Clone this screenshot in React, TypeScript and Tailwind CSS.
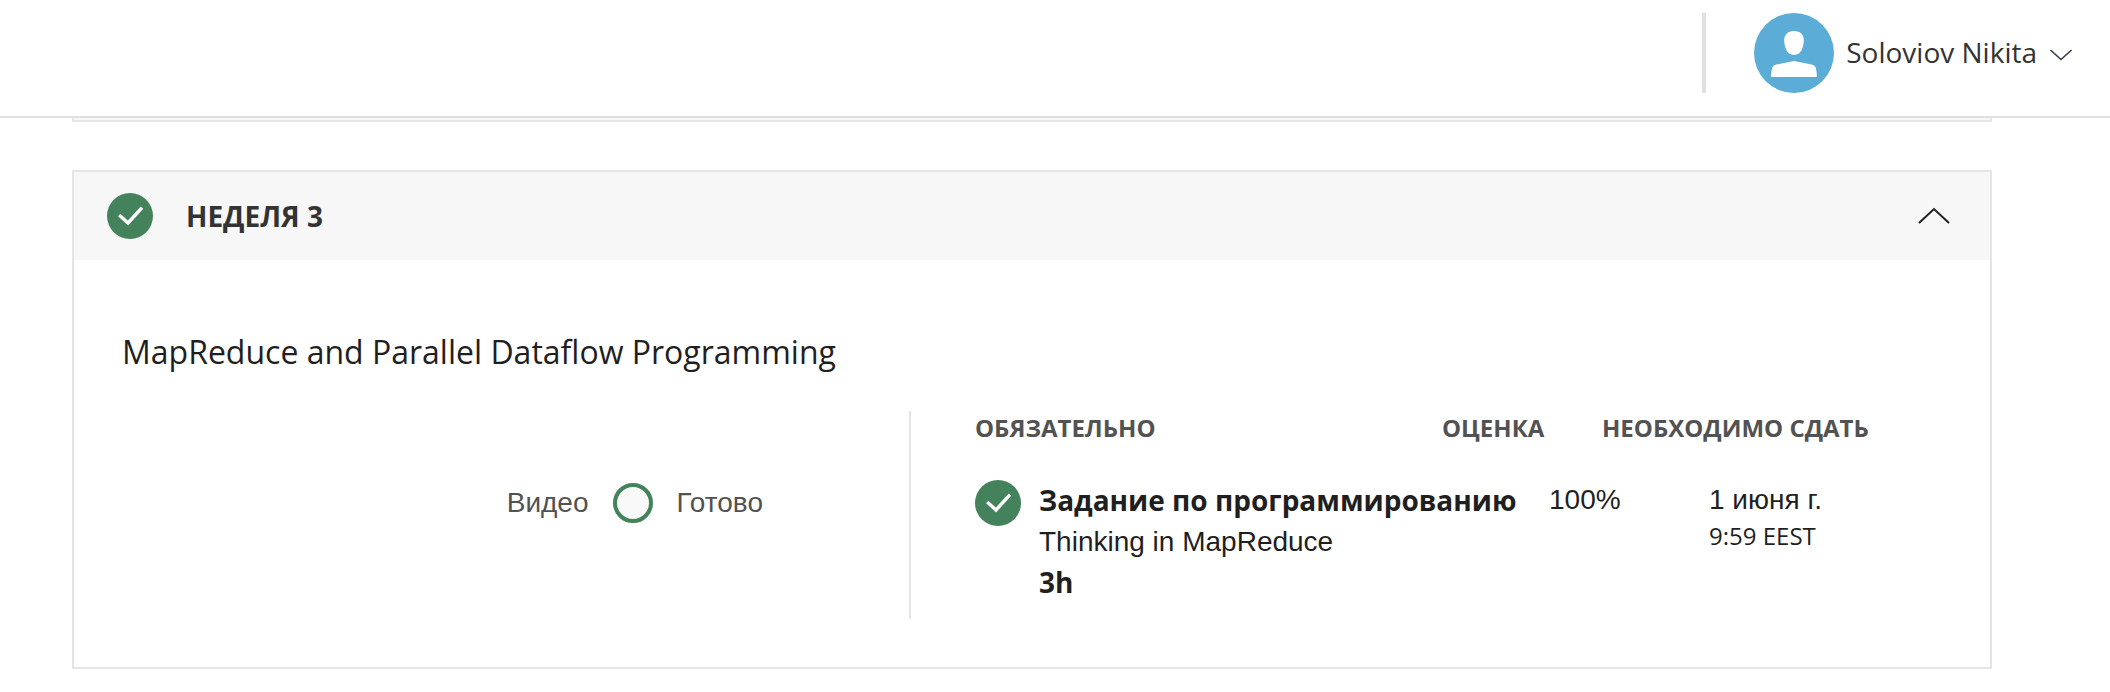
import React from "react";

const sans = "font-['Open_Sans','Noto_Sans',sans-serif]";
const arial = "font-['Liberation_Sans',Arial,sans-serif]";

function CheckBadge() {
  return (
    <svg viewBox="0 0 46 46" className="size-[46px] shrink-0" aria-hidden="true">
      <circle cx="23" cy="23" r="23" fill="#43825b" />
      <path d="M12.2 22 L21 30 L35 14.6" fill="none" stroke="#fff" strokeWidth="3.4" />
    </svg>
  );
}

function Header() {
  return (
    <header className="flex h-[118px] items-start justify-end border-b-2 border-[#dfdfdf] bg-white pt-[13px] pr-[37px]">
      <div className="mr-12 h-20 w-1 bg-[#dfdfdf]" />
      <button type="button" className="flex h-20 items-center text-[28px] leading-10 text-[#333]">
        <svg viewBox="0 0 80 80" className="mr-3 size-20" aria-hidden="true">
          <circle cx="40" cy="40" r="40" fill="#5badd7" />
          <path
            d="M40 18C46.5 18 50 22.2 49.8 27.6C49.5 35 47 42 40 42S30.5 35 30.2 27.6C30 22.2 33.5 18 40 18Z"
            fill="#fff"
          />
          <path
            d="M17 64C17.2 61 17.4 58 18 55.4C18.6 53 20 52.2 22.5 51.5L40 48L57.5 51.5C60 52.2 61.4 53 62 55.4C62.6 58 62.8 61 63 64Z"
            fill="#fff"
          />
        </svg>
        <span className="pb-0.5">Soloviov Nikita</span>
        <svg
          viewBox="0 0 24 24"
          className="mt-1 ml-3 size-6"
          fill="none"
          stroke="#333d4d"
          strokeWidth="1.6"
          aria-hidden="true"
        >
          <path d="M1.5 7 L12 16.5 L22.5 7" />
        </svg>
      </button>
    </header>
  );
}

function WeekCard() {
  return (
    <section className="mt-12 border-2 border-[#e5e5e5]">
      <button
        type="button"
        aria-expanded="true"
        className="flex h-[88px] w-full items-center bg-[#f7f7f7] pr-10 pl-[33px] text-left"
      >
        <CheckBadge />
        <span className="ml-[33px] text-[28px] leading-10 font-bold text-[#333]">НЕДЕЛЯ 3</span>
        <svg
          viewBox="0 0 32 32"
          className="ml-auto size-8"
          fill="none"
          stroke="#1f1f1f"
          strokeWidth="2"
          aria-hidden="true"
        >
          <path d="M1 23 L16 9 L31 23" />
        </svg>
      </button>

      <div className="px-12 pt-[68px] pb-12">
        <h2 className="text-[32px] leading-12 text-[#1f1f1f]">MapReduce and Parallel Dataflow Programming</h2>
        <div className="mt-[35px] grid grid-cols-[789fr_1031fr]">
          <div className={`flex h-52 items-start justify-end border-r-2 border-[#e5e5e5] pt-[72px] pr-[146px] ${arial}`}>
            <div className="flex h-10 items-center gap-6 text-[28px] leading-10 text-[#525252]">
              <span>Видео</span>
              <span className="size-10 rounded-full border-4 border-[#43825b] bg-[#f9f9f9]" />
              <span>Готово</span>
            </div>
          </div>
          <table className="ml-16 h-fit text-left text-[#1f1f1f]">
            <thead className="text-[24px] leading-[34px] text-[#525252]">
              <tr>
                <th className="w-[467px] font-bold">ОБЯЗАТЕЛЬНО</th>
                <th className="w-[160px] font-bold">ОЦЕНКА</th>
                <th className="font-bold whitespace-nowrap">НЕОБХОДИМО СДАТЬ</th>
              </tr>
            </thead>
            <tbody className="align-top text-[28px] leading-[41px]">
              <tr>
                <td colSpan={3} className="pt-[35px]">
                  <div className="flex items-start">
                    <CheckBadge />
                    <div className="ml-[18px] w-[510px]">
                      <p className="font-bold whitespace-nowrap">Задание по программированию</p>
                      <p className={arial}>Thinking in MapReduce</p>
                      <p className="font-bold">3h</p>
                    </div>
                    <div className={`w-[160px] leading-10 ${arial}`}>100%</div>
                    <div>
                      <p className={`leading-10 ${arial}`}>1 июня г.</p>
                      <p className="text-[24px] leading-8">9:59 EEST</p>
                    </div>
                  </div>
                </td>
              </tr>
            </tbody>
          </table>
        </div>
      </div>
    </section>
  );
}

export default function App() {
  return (
    <div className={`min-h-screen bg-white ${sans}`}>
      <Header />
      <main className="mr-[118px] ml-[72px]">
        <div className="h-1 border-x-2 border-b-2 border-[#e5e5e5] bg-[#f7f7f7]" />
        <WeekCard />
      </main>
    </div>
  );
}
